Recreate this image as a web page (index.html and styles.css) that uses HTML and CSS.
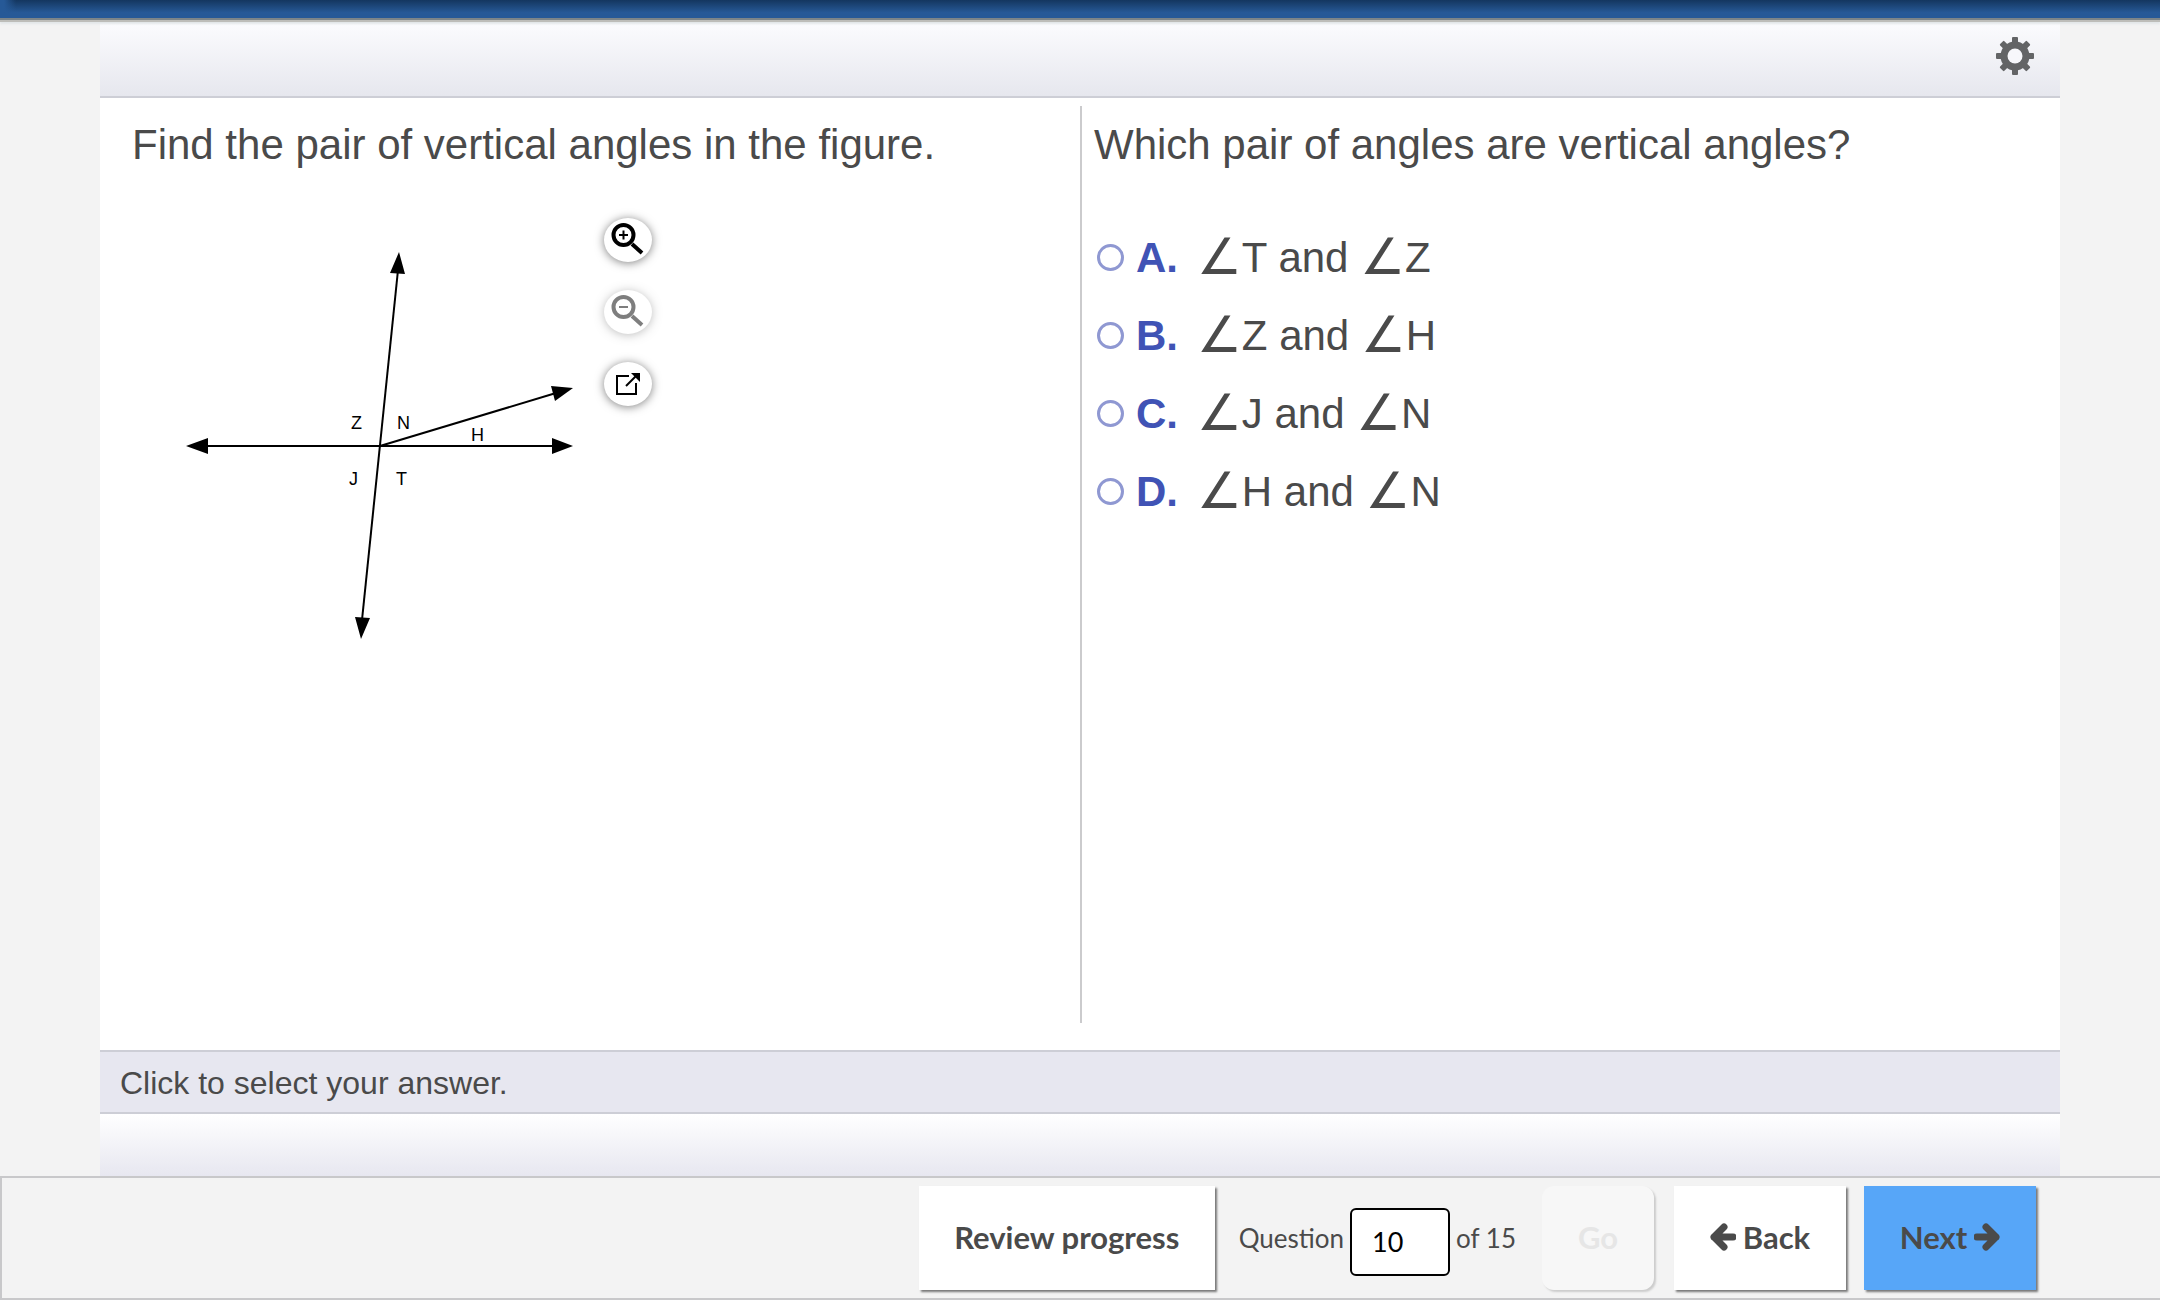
FILE: index.html
```html
<!DOCTYPE html>
<html lang="en">
<head>
  <meta charset="UTF-8">
  <meta name="viewport" content="width=device-width, initial-scale=1.0">
  <title>Vertical Angles</title>
  <link rel="stylesheet" href="styles.css">
</head>
<body>
  <header class="top-bar"></header>

  <!-- Main Content -->
  <main class="player">
    <div class="toolbar">
      <button class="settings" type="button" aria-label="Settings">
        <svg viewBox="-20 -20 40 40" width="40" height="40">
          <g fill="#636466">
            <g id="teeth">
              <rect x="-3" y="-19" width="6" height="38" rx="1"/>
              <rect x="-19" y="-3" width="38" height="6" rx="1"/>
            </g>
            <use href="#teeth" transform="rotate(45)"/>
            <circle r="14.5"/>
          </g>
          <circle r="7.5" fill="#f7f7fb"/>
        </svg>
      </button>
    </div>

    <div class="columns">
      <section class="question">
        <p class="prompt">Find the pair of vertical angles in the figure.</p>
        <div class="figure">
          <svg class="diagram" viewBox="180 218 400 432" width="400" height="432">
            <g stroke="#000" stroke-width="2">
              <path d="M200 446H560"/>
              <path d="M398 270L362 620"/>
              <path d="M380 446L556 393"/>
            </g>
            <path d="M186 446l22-8v16zM573 446l-21-8v16z"/>
            <path d="M399 252l6 22-15-1zM361 639l-6-22 15 1z"/>
            <path d="M573 388l-22-2 4 15z"/>
            <g class="labels">
              <text x="351" y="429">Z</text>
              <text x="397" y="429">N</text>
              <text x="471" y="441">H</text>
              <text x="349" y="485">J</text>
              <text x="396" y="485">T</text>
            </g>
          </svg>
          <div class="tools">
            <button class="tool" type="button" aria-label="Zoom in">
              <svg viewBox="0 0 48 44" width="48" height="44" fill="none" stroke="#000">
                <circle cx="19.500" cy="17" r="10" stroke-width="4"/>
                <path d="M28 26l10 9" stroke-width="4"/>
                <path d="M15 17h9M19.500 12.500v9" stroke-width="2"/>
              </svg>
            </button>
            <button class="tool" type="button" aria-label="Zoom out" disabled>
              <svg viewBox="0 0 48 44" width="48" height="44" fill="none" stroke="#000">
                <circle cx="19.500" cy="17" r="10" stroke-width="4"/>
                <path d="M28 26l10 9" stroke-width="4"/>
                <path d="M15 17h9" stroke-width="2"/>
              </svg>
            </button>
            <button class="tool" type="button" aria-label="Open in new window">
              <svg viewBox="0 0 48 44" width="48" height="44" fill="none" stroke="#000" stroke-width="2">
                <path d="M25 14H13v18h19V21"/>
                <path d="M22 24l10-10"/>
                <path d="M27 11h9v9z" fill="#000" stroke="none"/>
              </svg>
            </button>
          </div>
        </div>
      </section>

      <section class="answers">
        <p class="prompt">Which pair of angles are vertical angles?</p>
        <div class="choices">
          <label class="choice">
            <input type="radio" name="answer" value="A">
            <b class="letter">A.</b>
            <span><span class="angle">∠</span>T and <span class="angle">∠</span>Z</span>
          </label>
          <label class="choice">
            <input type="radio" name="answer" value="B">
            <b class="letter">B.</b>
            <span><span class="angle">∠</span>Z and <span class="angle">∠</span>H</span>
          </label>
          <label class="choice">
            <input type="radio" name="answer" value="C">
            <b class="letter">C.</b>
            <span><span class="angle">∠</span>J and <span class="angle">∠</span>N</span>
          </label>
          <label class="choice">
            <input type="radio" name="answer" value="D">
            <b class="letter">D.</b>
            <span><span class="angle">∠</span>H and <span class="angle">∠</span>N</span>
          </label>
        </div>
      </section>
    </div>

    <div class="hint">Click to select your answer.</div>
    <div class="player-footer"></div>
  </main>

  <!-- Bottom Navigation -->
  <nav class="bottom-nav">
    <button class="btn review" type="button">Review progress</button>
    <div class="pager">
      <label for="question-number">Question</label>
      <input id="question-number" type="text" value="10">
      <span>of 15</span>
    </div>
    <button class="btn go" type="button" disabled>Go</button>
    <button class="btn step" type="button">
      <svg viewBox="0 0 26 28" width="26" height="28"><path d="M14 4L4 14l10 10M4 14h19"/></svg>
      Back
    </button>
    <button class="btn step next" type="button">
      Next
      <svg viewBox="0 0 26 28" width="26" height="28"><path d="M12 4l10 10-10 10M22 14H3"/></svg>
    </button>
  </nav>
</body>
</html>
```

FILE: styles.css
```css
* {
  margin: 0;
  padding: 0;
  box-sizing: border-box;
}

body {
  font-family: "Liberation Sans", Arial, sans-serif;
  color: #4a4a4a;
  background-color: #f3f3f3;
  display: flex;
  flex-direction: column;
  min-height: 100vh;
}

button {
  border: none;
  background: none;
  font-family: inherit;
  color: inherit;
}

svg {
  display: block;
}

.top-bar {
  height: 18px;
  background: linear-gradient(to right, #265997 4px, transparent 16px),
              linear-gradient(#14365f, #265997 70%);
  box-shadow: 0 2px 0 #7c8589, 0 4px 0 #bdbdb9, 0 6px 2px #e2e6e8;
  position: relative;
}

.player {
  flex: 1;
  display: flex;
  flex-direction: column;
  margin: 0 100px;
  background-color: #fff;
}

.toolbar {
  height: 80px;
  padding: 0 25px 2px;
  display: flex;
  justify-content: flex-end;
  align-items: center;
  background: linear-gradient(#fdfdff, #e6e7ee);
  border-bottom: 2px solid #cdced6;
}

.columns {
  flex: 1;
  display: grid;
  grid-template-columns: 1fr 1fr;
}

.question {
  padding: 23px 32px;
}

.answers {
  margin: 8px 0 27px;
  padding: 15px 12px;
  border-left: 2px solid #cbcbcd;
}

.prompt {
  font-size: 42px;
  line-height: 48px;
}

.figure {
  display: flex;
  gap: 24px;
  margin: 49px 0 0 48px;
}

.labels {
  font-size: 18px;
}

.tools {
  display: flex;
  flex-direction: column;
  gap: 28px;
}

.tool {
  width: 48px;
  height: 44px;
  border-radius: 50%;
  background-color: #fff;
  box-shadow: 0 1px 10px rgba(0, 0, 0, 0.5);
}

.tool:disabled {
  opacity: 0.5;
}

.choices {
  display: flex;
  flex-direction: column;
  gap: 30px;
  margin-top: 65px;
}

.choice {
  display: flex;
  align-items: center;
  font-size: 42px;
  line-height: 48px;
}

.choice input {
  appearance: none;
  width: 27px;
  height: 27px;
  margin: 0 12px 2px 3px;
  border: 3px solid #8f98d2;
  border-radius: 50%;
  background-color: #fff;
}

.letter {
  width: 61px;
  color: #4053b5;
}

.angle {
  font-family: "DejaVu Sans", sans-serif;
  font-size: 50px;
  line-height: 0;
  vertical-align: -2px;
}

.hint {
  padding: 13px 20px 11px;
  font-size: 32px;
  line-height: 36px;
  background-color: #e7e7f0;
  border-top: 2px solid #cdced6;
  border-bottom: 2px solid #cdced6;
}

.player-footer {
  height: 62px;
  background: linear-gradient(#fff, #e7e7f0);
}

.bottom-nav {
  display: flex;
  justify-content: flex-end;
  align-items: center;
  padding: 8px 124px 8px 0;
  border: 2px solid #c8c8ca;
  border-right: none;
  font-family: Lato, sans-serif;
}

.btn {
  height: 104px;
  padding-bottom: 2px;
  display: flex;
  justify-content: center;
  align-items: center;
  gap: 7px;
  font-size: 31px;
  font-weight: bold;
  background-color: #fff;
  box-shadow: 2px 2px 2px #777;
}

.btn path {
  fill: none;
  stroke: #4a4a4a;
  stroke-width: 7;
  stroke-linecap: round;
  stroke-linejoin: round;
}

.review {
  width: 296px;
}

.pager {
  display: flex;
  align-items: center;
  gap: 6px;
  margin: 0 26px 0 24px;
  font-size: 26px;
}

.pager input {
  width: 100px;
  height: 68px;
  margin-top: 7px;
  padding: 0 20px;
  border: 2px solid #000;
  border-radius: 6px;
  font-family: inherit;
  font-size: 27px;
}

.go {
  width: 112px;
  margin-right: 20px;
  color: #e6e6e6;
  background-color: #f7f7f7;
  border-radius: 12px;
  box-shadow: 2px 2px 2px #ccc;
}

.step {
  width: 172px;
}

.next {
  margin-left: 18px;
  background-color: #57a6f8;
}
```
